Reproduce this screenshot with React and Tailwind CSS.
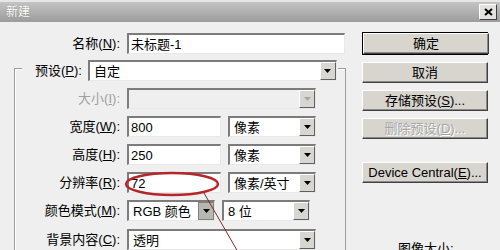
import React from 'react'

const font = { fontFamily: '"Liberation Sans", "Noto Sans CJK SC", sans-serif' }

const Arrow = ({ disabled }) => (
    <svg width="7" height="4" viewBox="0 0 7 4">
        <path d="M0 0 H7 L3.5 4 Z" fill={disabled ? '#a8a8a8' : '#000'} />
    </svg>
)

const Field = ({ w, value }) => (
    <div className={`${w} h-[21px] bg-white border-t-2 border-l-2 border-b border-r border-t-[#7c7c7c] border-l-[#7c7c7c] border-b-[#e8e8e8] border-r-[#e8e8e8] flex items-center pl-[2px] text-[13px] leading-none`}>
        {value}
    </div>
)

const Select = ({ w, value, disabled, pressed }) => (
    <div className={`${w} h-[21px] ${disabled ? 'bg-[#efefef]' : 'bg-white'} border-t-2 border-l-2 border-b border-r border-t-[#7c7c7c] border-l-[#7c7c7c] border-b-[#e8e8e8] border-r-[#e8e8e8] flex items-center text-[13px] leading-none`}>
        <div className="flex-1 pl-[4px]">{value}</div>
        <div className={`w-[16px] h-full flex items-center justify-center border ${pressed ? 'bg-[#b8b6b1] border-[#808080]' : 'bg-[#d8d6d0] border-t-white border-l-white border-b-[#606060] border-r-[#606060]'}`}>
            <Arrow disabled={disabled} />
        </div>
    </div>
)

const Label = ({ children, grey }) => (
    <div className={`w-[106px] text-right pr-[1px] text-[13px] leading-none ${grey ? 'text-[#a0a0a0]' : 'text-black'}`}>
        {children}
    </div>
)

const Row = ({ label, grey, children }) => (
    <div className="flex items-center h-[21px] mt-[7px]">
        <Label grey={grey}>{label}</Label>
        <div className="ml-[6px] flex gap-[7px]">{children}</div>
    </div>
)

const Btn = ({ children, disabled, cls = '' }) => (
    <div className={`w-[126px] h-[21px] bg-[#d8d5cf] border border-t-white border-l-white border-b-[#404040] border-r-[#404040] shadow-[inset_-1px_-1px_#8a8a8a] flex items-center justify-center text-[13px] leading-none ${disabled ? 'text-[#a6a6a6] [text-shadow:1px_1px_#fff]' : 'text-black'} ${cls}`}>
        {children}
    </div>
)

const U = ({ children }) => <span className="underline">{children}</span>

const App = () => {
    return (
        <div className="relative w-[500px] h-[250px] overflow-hidden bg-[#efefef] text-black" style={font}>
            {/* title bar */}
            <div className="h-[22px] bg-gradient-to-b from-[#c4c4c4] to-[#9c9c9c] border-t-2 border-t-[#e6e6e6] flex items-center justify-between pl-[6px] pr-[3px]">
                <span className="text-[12px] text-white [text-shadow:0_0_1px_#777]">新建</span>
                <div className="w-[18px] h-[16px] bg-[#e4e2de] border border-t-white border-l-white border-b-[#404040] border-r-[#404040] flex items-center justify-center">
                    <svg width="9" height="8" viewBox="0 0 9 8">
                        <path d="M1 1 L8 7 M8 1 L1 7" stroke="#000" strokeWidth="2" />
                    </svg>
                </div>
            </div>

            <div className="flex">
                {/* left form */}
                <div className="w-[350px]">
                    <div className="flex items-center h-[21px] mt-[11px]">
                        <div className="w-[121px] text-right pr-[1px] text-[13px] leading-none">名称(<U>N</U>):</div>
                        <div className="ml-[6px]"><Field w="w-[218px]" value="未标题-1" /></div>
                    </div>

                    <div className="ml-[14px] mt-[14px] w-[332px] h-[200px] border-t border-l border-r border-[#9c9c9c] shadow-[inset_1px_1px_#fff]">
                        <div className="-mt-[9px] ml-[7px] w-[316px] bg-[#efefef] flex items-center h-[21px]">
                            <div className="pl-[13px] text-[13px] leading-none">预设(<U>P</U>):</div>
                            <div className="ml-[6px]"><Select w="w-[249px]" value="自定" /></div>
                        </div>
                        <Row label={<>大小(<U>I</U>):</>} grey><Select w="w-[189px]" value="" disabled /></Row>
                        <Row label={<>宽度(<U>W</U>):</>}>
                            <Field w="w-[94px]" value="800" />
                            <Select w="w-[88px]" value="像素" />
                        </Row>
                        <Row label={<>高度(<U>H</U>):</>}>
                            <Field w="w-[94px]" value="250" />
                            <Select w="w-[88px]" value="像素" />
                        </Row>
                        <Row label={<>分辨率(<U>R</U>):</>}>
                            <Field w="w-[94px]" value="72" />
                            <Select w="w-[88px]" value="像素/英寸" />
                        </Row>
                        <Row label={<>颜色模式(<U>M</U>):</>}>
                            <Select w="w-[88px]" value="RGB 颜色" pressed />
                            <Select w="w-[88px]" value="8 位" />
                        </Row>
                        <div className="flex items-center h-[21px] mt-[8px]">
                            <Label>背景内容(<U>C</U>):</Label>
                            <div className="ml-[6px]"><Select w="w-[189px]" value="透明" /></div>
                        </div>
                    </div>
                </div>

                {/* right buttons */}
                <div className="ml-[12px] pt-[10px] flex flex-col">
                    <div className="border border-black w-[126px]">
                        <Btn cls="w-[124px] h-[19px]">确定</Btn>
                    </div>
                    <div className="mt-[7px]"><Btn>取消</Btn></div>
                    <div className="mt-[7px]"><Btn>存储预设(<U>S</U>)...</Btn></div>
                    <div className="mt-[7px]"><Btn disabled>删除预设(<U>D</U>)...</Btn></div>
                    <div className="mt-[23px]"><Btn>Device Central(<U>E</U>)...</Btn></div>
                    <div className="mt-[59px] ml-[36px] text-[13px] leading-none">图像大小:</div>
                </div>
            </div>

            {/* red annotation */}
            <svg className="absolute left-0 top-0 pointer-events-none" width="500" height="250">
                <ellipse cx="172" cy="184" rx="46" ry="11" fill="none" stroke="#b5262b" strokeWidth="2.5" />
                <line x1="204" y1="193" x2="238" y2="252" stroke="#7a2a2a" strokeWidth="1" />
            </svg>
        </div>
    )
}

export default App
